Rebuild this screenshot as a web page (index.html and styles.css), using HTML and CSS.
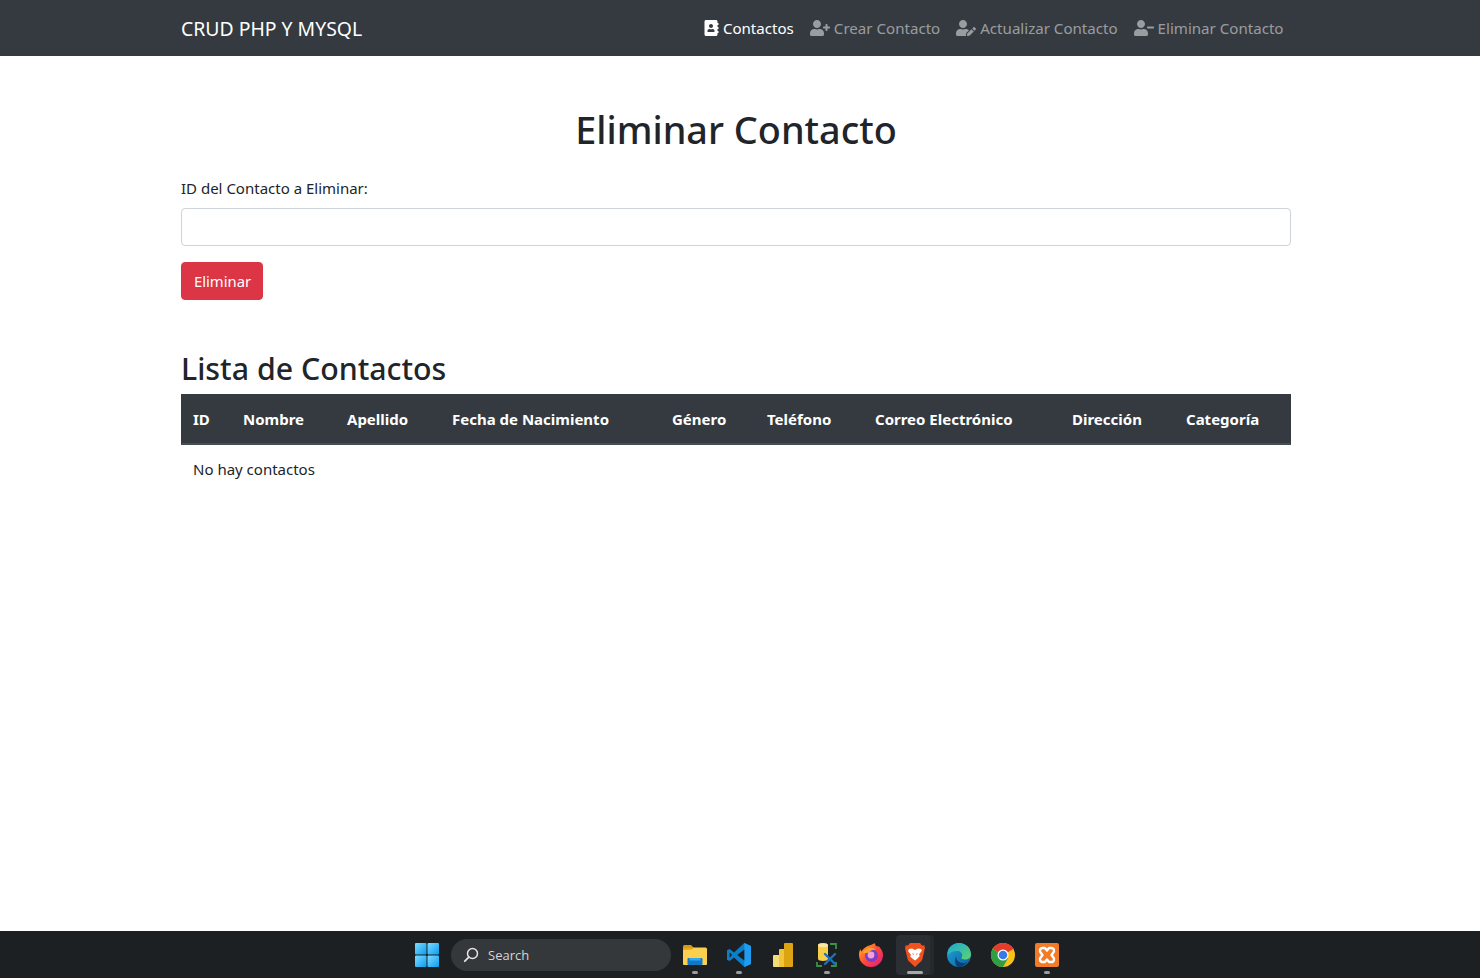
FILE: index.html
```html
<!DOCTYPE html>
<html lang="es">
<head>
    <meta charset="UTF-8">
    <meta name="viewport" content="width=device-width, initial-scale=1.0">
    <title>Eliminar Contacto</title>
    <link rel="stylesheet" href="styles.css">
</head>
<body>
    <nav class="navbar">
        <a class="brand" href="#">CRUD PHP Y MYSQL</a>
        <ul class="nav-links">
            <li><a class="active" href="#">
                <svg class="icon icon-book" viewBox="0 0 448 512"><path d="M436 160c6.600 0 12-5.400 12-12v-40c0-6.600-5.400-12-12-12h-20V48c0-26.500-21.500-48-48-48H48C21.500 0 0 21.500 0 48v416c0 26.500 21.500 48 48 48h320c26.500 0 48-21.500 48-48v-48h20c6.600 0 12-5.400 12-12v-40c0-6.600-5.400-12-12-12h-20v-64h20c6.600 0 12-5.400 12-12v-40c0-6.600-5.400-12-12-12h-20v-64h20zm-228-32c35.300 0 64 28.700 64 64s-28.700 64-64 64-64-28.700-64-64 28.700-64 64-64zm112 236.800c0 10.600-10 19.200-22.400 19.200H118.400C106 384 96 375.400 96 364.800v-19.200c0-31.800 30.100-57.600 67.200-57.600h5c12.300 5.100 25.700 8 39.800 8s27.600-2.900 39.800-8h5c37.100 0 67.200 25.800 67.200 57.600v19.200z"/></svg>Contactos</a></li>
            <li><a href="#">
                <svg class="icon" viewBox="0 0 640 512"><path d="M624 208h-64v-64c0-8.800-7.200-16-16-16h-32c-8.800 0-16 7.200-16 16v64h-64c-8.800 0-16 7.200-16 16v32c0 8.800 7.200 16 16 16h64v64c0 8.800 7.200 16 16 16h32c8.800 0 16-7.200 16-16v-64h64c8.800 0 16-7.200 16-16v-32c0-8.800-7.200-16-16-16zm-400 48c70.700 0 128-57.300 128-128S294.700 0 224 0 96 57.300 96 128s57.300 128 128 128zm89.600 32h-16.700c-22.200 10.200-46.900 16-72.900 16s-50.600-5.800-72.900-16h-16.700C60.200 288 0 348.200 0 422.400V464c0 26.500 21.500 48 48 48h352c26.500 0 48-21.500 48-48v-41.600c0-74.200-60.200-134.400-134.400-134.400z"/></svg>Crear Contacto</a></li>
            <li><a href="#">
                <svg class="icon" viewBox="0 0 640 512"><path d="M224 256c70.700 0 128-57.300 128-128S294.700 0 224 0 96 57.300 96 128s57.300 128 128 128zm89.600 32h-16.700c-22.200 10.200-46.900 16-72.900 16s-50.600-5.800-72.900-16h-16.700C60.200 288 0 348.200 0 422.400V464c0 26.500 21.500 48 48 48h274.900c-2.400-6.800-3.400-14-2.600-21.300l6.800-60.900 1.200-11.100 7.900-7.900 77.300-77.300c-24.500-27.700-60-45.500-99.900-45.500zm45.300 145.300l-6.800 61c-1.100 10.200 7.500 18.800 17.600 17.600l60.900-6.800 137.900-137.900-71.700-71.700-137.900 137.800zM633 268.900L595.100 231c-9.300-9.300-24.500-9.300-33.800 0l-37.800 37.800-4.100 4.100 71.800 71.700 41.800-41.800c9.300-9.400 9.300-24.500 0-33.900z"/></svg>Actualizar Contacto</a></li>
            <li><a href="#">
                <svg class="icon" viewBox="0 0 640 512"><path d="M624 208H432c-8.800 0-16 7.200-16 16v32c0 8.800 7.200 16 16 16h192c8.800 0 16-7.200 16-16v-32c0-8.800-7.200-16-16-16zm-400 48c70.700 0 128-57.300 128-128S294.700 0 224 0 96 57.300 96 128s57.300 128 128 128zm89.600 32h-16.700c-22.200 10.200-46.900 16-72.900 16s-50.600-5.800-72.900-16h-16.700C60.200 288 0 348.200 0 422.400V464c0 26.500 21.500 48 48 48h352c26.500 0 48-21.500 48-48v-41.600c0-74.200-60.200-134.400-134.400-134.400z"/></svg>Eliminar Contacto</a></li>
        </ul>
    </nav>

    <main class="container">
        <h1>Eliminar Contacto</h1>
        <form class="delete-form">
            <label for="contactId">ID del Contacto a Eliminar:</label>
            <input type="text" id="contactId">
            <button type="button">Eliminar</button>
        </form>

        <h2>Lista de Contactos</h2>
        <table>
            <colgroup>
                <col class="c-id"><col class="c-nombre"><col class="c-apellido"><col class="c-fecha"><col class="c-genero"><col class="c-telefono"><col class="c-correo"><col class="c-direccion"><col class="c-categoria">
            </colgroup>
            <thead>
                <tr>
                    <th>ID</th>
                    <th>Nombre</th>
                    <th>Apellido</th>
                    <th>Fecha de Nacimiento</th>
                    <th>Género</th>
                    <th>Teléfono</th>
                    <th>Correo Electrónico</th>
                    <th>Dirección</th>
                    <th>Categoría</th>
                </tr>
            </thead>
            <tbody>
                <tr><td colspan="9">No hay contactos</td></tr>
            </tbody>
        </table>
    </main>

    <footer class="taskbar">
        <div class="task-item">
            <svg class="task-icon" viewBox="0 0 24 24">
                <defs>
                    <linearGradient id="winBlue" x1="0" y1="0" x2="1" y2="1"><stop offset="0" stop-color="#7fdcff"/><stop offset="1" stop-color="#0a9cf0"/></linearGradient>
                </defs>
                <rect x="0" y="0" width="11.500" height="11.500" rx="1" fill="url(#winBlue)"/>
                <rect x="12.500" y="0" width="11.500" height="11.500" rx="1" fill="url(#winBlue)"/>
                <rect x="0" y="12.500" width="11.500" height="11.500" rx="1" fill="url(#winBlue)"/>
                <rect x="12.500" y="12.500" width="11.500" height="11.500" rx="1" fill="url(#winBlue)"/>
            </svg>
        </div>
        <div class="search">
            <svg class="search-icon" viewBox="0 0 16 16"><circle cx="9.500" cy="6.500" r="5" fill="none" stroke="#e4e4e4" stroke-width="1.500"/><path d="M5.800 10.200L1.800 14.200" stroke="#e4e4e4" stroke-width="1.800" stroke-linecap="round"/></svg>
            <span>Search</span>
        </div>
        <div class="task-item running">
            <svg class="task-icon" viewBox="0 0 24 24">
                <path d="M0 3.500A1.500 1.500 0 0 1 1.500 2h6.500l2.500 2.500H0z" fill="#d99a10"/>
                <path d="M0 4.500h22.500A1.500 1.500 0 0 1 24 6v15a1 1 0 0 1-1 1H1a1 1 0 0 1-1-1z" fill="#fcd04f"/>
                <path d="M0 7l9-.5 2-2H0z" fill="#e3a81f"/>
                <rect x="4.500" y="15" width="15" height="7" rx="1" fill="#0f78c8"/>
                <rect x="6.500" y="15" width="11" height="2.500" fill="#36a7ec"/>
            </svg>
        </div>
        <div class="task-item running">
            <svg class="task-icon" viewBox="0 0 24 24">
                <path d="M17.300 0L24 3v18l-6.700 3L7 14.500 2.600 18 0 16.700V7.300L2.600 6 7 9.500z" fill="#0a7fcb"/>
                <path d="M17.300 0L24 3v18l-6.700 3z" fill="#1f9cf0"/>
                <path d="M17.300 6.500L10.200 12l7.100 5.500z" fill="#1e1f22"/>
                <path d="M2.600 9.200L5 12l-2.400 2.800z" fill="#1e1f22"/>
            </svg>
        </div>
        <div class="task-item">
            <svg class="task-icon small" viewBox="0 0 20 24">
                <rect x="0" y="12" width="8" height="12" rx="1" fill="#f6dc74"/>
                <rect x="6" y="6" width="8" height="18" rx="1" fill="#f2c43a"/>
                <rect x="11" y="0" width="9" height="24" rx="1" fill="#dca312"/>
            </svg>
        </div>
        <div class="task-item running">
            <svg class="task-icon" viewBox="0 0 24 24">
                <path d="M3 2c0-1.200 2.500-2 5-2s5 .8 5 2v14c0 1.200-2.500 2-5 2s-5-.8-5-2z" fill="#f5cf4a"/>
                <ellipse cx="8" cy="2.200" rx="5" ry="2" fill="#fbe8a0"/>
                <path d="M15 1h6v5M2 19v4h5M16 23h5v-4" fill="none" stroke="#3f8f46" stroke-width="1.800"/>
                <path d="M10 11l10 10M20 11L10 21" stroke="#1871c2" stroke-width="2.400" stroke-linecap="round"/>
            </svg>
        </div>
        <div class="task-item">
            <svg class="task-icon" viewBox="0 0 24 24">
                <defs>
                    <linearGradient id="foxOuter" x1="0" y1="0" x2="1" y2="1"><stop offset="0" stop-color="#ffc21f"/><stop offset=".5" stop-color="#ff4a3a"/><stop offset="1" stop-color="#e31587"/></linearGradient>
                </defs>
                <path d="M12 2c2-1 3.500-1.500 4-2 0 2 .8 3 2 3.500 1-.3 1.800-.2 2.500.5 2 2.500 3.500 5 3.500 8a12 12 0 0 1-24 0c0-2 .3-4 1.500-6 0 1 .4 2 1 2.500C4 6 7 3 12 2z" fill="url(#foxOuter)"/>
                <circle cx="12.500" cy="12.500" r="6.500" fill="#7a3fc8"/>
                <circle cx="12" cy="12" r="3.400" fill="#f0a0d8"/>
                <path d="M4 10c2-5 9-7 13-3-3-.5-5 0-6.500 2 -1 1.200-4 1-6.500 1z" fill="#ffa12b"/>
            </svg>
        </div>
        <div class="task-item running current">
            <svg class="task-icon" viewBox="0 0 20 24">
                <path d="M5 0h10l2 2.500 2.300-.3L20 5l-2.600 11c-.3 1.200-.8 2-1.900 2.800L10 24l-5.500-5.200c-1.100-.8-1.600-1.600-1.900-2.800L0 5l.7-2.800L3 2.500z" fill="#f1501f"/>
                <path d="M4 6l3-.5L10 7l3-1.500 3 .5 1 1.500-3 4 .8 1.500L12 16l-2 1.500L8 16l-2.800-2.500L6 12 3 8z" fill="#fff"/>
                <path d="M7.500 10l1.500 1-1 1zM12.500 10L11 11l1 1z" fill="#f1501f"/>
            </svg>
        </div>
        <div class="task-item">
            <svg class="task-icon" viewBox="0 0 24 24">
                <defs>
                    <linearGradient id="edgeBlue" x1="0" y1="0" x2="1" y2="1"><stop offset="0" stop-color="#1fa5dc"/><stop offset="1" stop-color="#0c5e9c"/></linearGradient>
                    <linearGradient id="edgeGreen" x1="0" y1="0" x2="1" y2="1"><stop offset="0" stop-color="#1ba6d8"/><stop offset="1" stop-color="#5fd46a"/></linearGradient>
                </defs>
                <circle cx="12" cy="12" r="12" fill="url(#edgeBlue)"/>
                <path d="M1 8C3 2.500 8 0 12 0c7 0 12 5 12 11.500 0 3-2.500 5-6 5-2.500 0-4-1-3.500-2 1.500-2 .5-6-3.500-6.500C7 7.500 3 9 1 12z" fill="url(#edgeGreen)"/>
                <path d="M9 13c0 4 3 7 7 7 2 0 3.500-.5 4.500-1.500C18 22 15 24 12 24 9 24 7 20 9 13z" fill="#0b3f78"/>
            </svg>
        </div>
        <div class="task-item">
            <svg class="task-icon" viewBox="0 0 24 24">
                <circle cx="12" cy="12" r="12" fill="#fbc116"/>
                <path d="M12 12L1.600 6A12 12 0 0 1 22.400 6z" fill="#e33b2e"/>
                <path d="M12 12L1.600 6A12 12 0 0 0 12 24l5.200-9z" fill="#2f9e44"/>
                <circle cx="12" cy="12" r="5.500" fill="#fff"/>
                <circle cx="12" cy="12" r="4.300" fill="#3b78e7"/>
            </svg>
        </div>
        <div class="task-item running">
            <svg class="task-icon" viewBox="0 0 24 24">
                <rect width="24" height="24" rx="2" fill="#f27b28"/>
                <path d="M7.500 5h2.500l2 2.500L14 5h2.500c2.500 0 3.500 3.500 1.500 5l-1.500 2 1.500 2c2 1.500 1 5-1.500 5H14l-2-2.500L10 19H7.500c-2.500 0-3.500-3.500-1.500-5l1.500-2L6 10C4 8.500 5 5 7.500 5z" fill="none" stroke="#fff" stroke-width="2.400" stroke-linejoin="round"/>
            </svg>
        </div>
    </footer>
</body>
</html>
```

FILE: styles.css
```css
* {
    box-sizing: border-box;
}
html, body {
    height: 100%;
}
body {
    margin: 0;
    display: flex;
    flex-direction: column;
    font-family: "Noto Sans", "Open Sans", Arial, sans-serif;
    font-size: 15px;
    color: #212529;
    background-color: #fff;
}
a {
    text-decoration: none;
}

/* barra de navegacion */
.navbar {
    height: 56px;
    flex-shrink: 0;
    display: flex;
    align-items: center;
    justify-content: space-between;
    padding: 0 188.500px 0 181px;
    background-color: #343a40;
}
.brand {
    font-size: 19.400px;
    color: #fff;
}
.nav-links {
    display: flex;
    list-style: none;
    margin: 0;
    padding: 0;
}
.nav-links a {
    display: flex;
    align-items: center;
    padding: 8px;
    font-size: 15.100px;
    color: rgba(255, 255, 255, 0.5);
}
.nav-links a.active {
    color: #fff;
}
.icon {
    width: 20px;
    height: 16px;
    margin-right: 4px;
    fill: currentColor;
}
.icon-book {
    width: 15px;
}

/* contenido */
.container {
    flex: 1;
    width: 1110px;
    margin-left: 181px;
}
h1 {
    margin: 48px 0 0;
    font-size: 37.800px;
    font-weight: 500;
    line-height: 52px;
    text-align: center;
}
.delete-form {
    margin-top: 20px;
}
label {
    display: block;
    line-height: 24px;
    margin-bottom: 8px;
}
input {
    display: block;
    width: 100%;
    height: 38px;
    border: 1px solid #ced4da;
    border-radius: 4px;
}
button {
    display: block;
    height: 38px;
    margin-top: 16px;
    padding: 0 11px 0 12px;
    font: inherit;
    font-size: 14.800px;
    color: #fff;
    background-color: #dc3545;
    border: 1px solid #dc3545;
    border-radius: 4px;
}
h2 {
    margin: 48px 0 0;
    font-size: 30.300px;
    font-weight: 500;
    line-height: 42px;
}
table {
    width: 100%;
    border-collapse: collapse;
    table-layout: fixed;
    margin-top: 4px;
}
.c-id { width: 50px; }
.c-nombre { width: 104px; }
.c-apellido { width: 105px; }
.c-fecha { width: 220px; }
.c-genero { width: 95px; }
.c-telefono { width: 108px; }
.c-correo { width: 197px; }
.c-direccion { width: 114px; }
.c-categoria { width: 117px; }
th {
    height: 50px;
    padding: 0 0 0 12px;
    text-align: left;
    white-space: nowrap;
    font-weight: 700;
    color: #fff;
    background-color: #343a40;
    border-bottom: 2px solid #454d55;
}
td {
    height: 49px;
    padding: 0 12px;
}

/* barra de tareas */
.taskbar {
    height: 47px;
    flex-shrink: 0;
    display: flex;
    align-items: center;
    padding-left: 405px;
    background-color: #1c2023;
    font-family: "Open Sans", "Noto Sans", sans-serif;
}
.task-item {
    position: relative;
    width: 44px;
    height: 40px;
    display: flex;
    align-items: center;
    justify-content: center;
}
.task-icon {
    width: 24px;
    height: 24px;
}
.task-icon.small {
    width: 20px;
}
.running::after {
    content: "";
    position: absolute;
    left: 19px;
    bottom: 1px;
    width: 6px;
    height: 3px;
    border-radius: 2px;
    background-color: #9b9b9b;
}
.current {
    width: 34px;
    margin: 0 7px 0 3px;
    padding-left: 4px;
    background-color: #2b2f33;
    border-radius: 4px;
    box-shadow: 4px 0 0 #25292c;
}
.current::after {
    left: 11px;
    width: 16px;
    background-color: #a8a8a8;
}
.search {
    width: 220px;
    height: 32px;
    margin: 0 2px;
    display: flex;
    align-items: center;
    gap: 9px;
    padding-left: 12px;
    border-radius: 16px;
    background-color: #34383b;
    font-size: 13px;
    color: #d5d5d5;
}
.search-icon {
    width: 16px;
    height: 16px;
}
```
